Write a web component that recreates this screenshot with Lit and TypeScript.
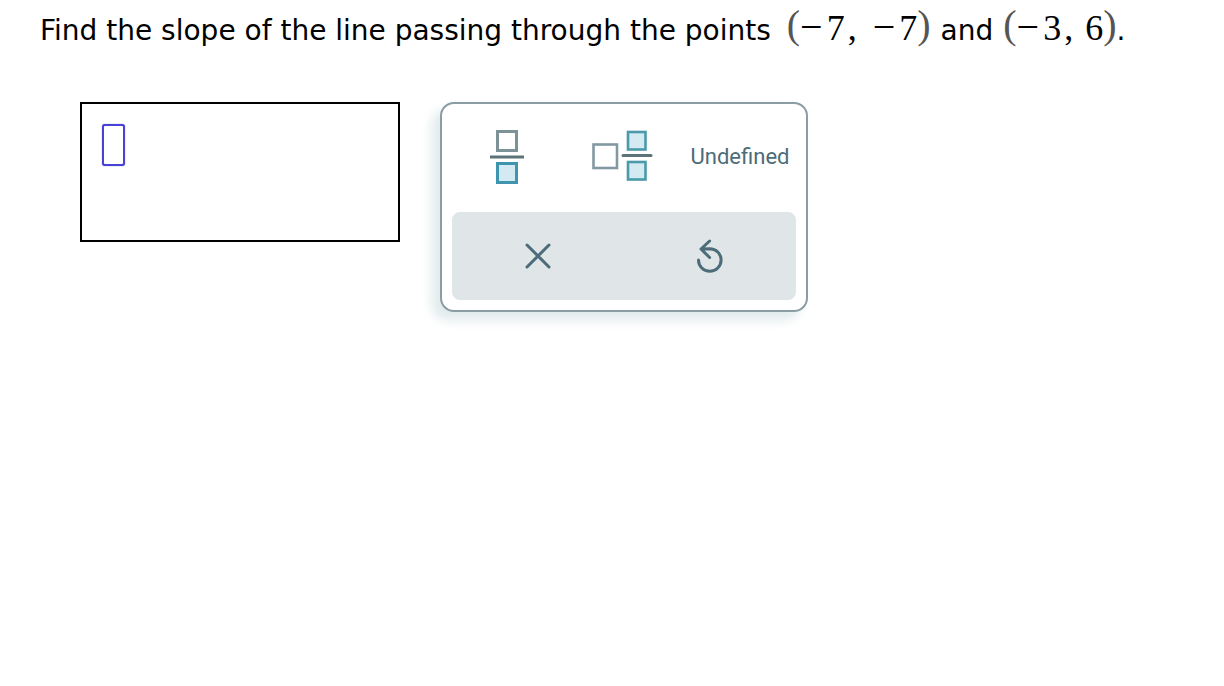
import { LitElement, html, css, svg } from "lit";
import { customElement, state } from "lit/decorators.js";

@customElement("math-point")
class MathPoint extends LitElement {
  static properties = { x: { type: String }, y: { type: String }, spaced: { type: Boolean } };
  declare x: string;
  declare y: string;
  declare spaced: boolean;

  static styles = css`
    :host {
      display: inline-block;
      font-family: "Liberation Serif", "Times New Roman", serif;
      font-size: 36px;
      line-height: 36px;
      white-space: nowrap;
    }
    .paren {
      color: #555;
      font-size: 40px;
      line-height: 32px;
      vertical-align: 2px;
    }
    .sign {
      margin-right: 4px;
      font-size: 40px;
      line-height: 32px;
    }
    .comma {
      margin: 0 12px 0 3px;
    }
    .spaced .comma {
      margin-right: 16px;
    }
  `;

  private number(value: string) {
    return value.startsWith("-")
      ? html`<span class="sign">−</span><span>${value.slice(1)}</span>`
      : html`<span>${value}</span>`;
  }

  render() {
    return html`<span class="paren">(</span><span class="pair ${this.spaced ? "spaced" : ""}">${this.number(this.x)}<span class="comma">,</span>${this.number(this.y)}</span><span class="paren">)</span>`;
  }
}

const fractionIcon = svg`
  <rect x="7.5" y="1.5" width="19" height="19" fill="#fff" stroke="#7b9296" stroke-width="3"/>
  <path d="M0 27H34" stroke="#5c7379" stroke-width="3"/>
  <rect x="7.5" y="33.5" width="19" height="19" fill="#d3eaf3" stroke="#3f95ad" stroke-width="3"/>`;

const mixedIcon = svg`
  <rect x="1.5" y="14.5" width="23.5" height="23.5" fill="#fff" stroke="#8298a2" stroke-width="2.6"/>
  <rect x="36" y="2" width="17.5" height="17.5" fill="#d3eaf3" stroke="#4a9aa9" stroke-width="2.6"/>
  <path d="M31 25.5H59" stroke="#5c7379" stroke-width="3" stroke-linecap="round"/>
  <rect x="36" y="32" width="17.5" height="17.5" fill="#d3eaf3" stroke="#4a9aa9" stroke-width="2.6"/>`;

@customElement("app-root")
class AppRoot extends LitElement {
  @state() private answer = "";

  static styles = css`
    :host {
      display: block;
      background: #fff;
      color: #000;
      font-family: "DejaVu Sans", Verdana, sans-serif;
    }
    main {
      padding: 9px 40px;
    }
    .question {
      display: flex;
      flex-wrap: wrap;
      align-items: baseline;
      margin: 0;
      font-size: 28px;
      font-weight: 400;
      line-height: 40px;
    }
    .before {
      margin-right: 16px;
    }
    .and {
      margin: 0 10px;
    }
    .work {
      display: flex;
      flex-wrap: wrap;
      align-items: flex-start;
      gap: 40px;
      padding: 51px 40px;
    }
    .answer {
      box-sizing: border-box;
      width: 320px;
      min-height: 140px;
      padding: 20px;
      border: 2px solid #000;
    }
    .slot {
      display: block;
      box-sizing: border-box;
      width: 23px;
      height: 42px;
      margin: 0;
      padding: 0;
      border: 2px solid #4a42d4;
      border-radius: 3px;
      outline: none;
      background: #fff;
      box-shadow: 0 0 1px #4a42d4;
      font: 24px "DejaVu Sans", sans-serif;
      text-align: center;
    }
    .keypad {
      box-sizing: border-box;
      width: 368px;
      padding: 0 10px 10px;
      border: 2px solid #8a9da3;
      border-radius: 14px;
      background: #fff;
      box-shadow: -8px 8px 12px #e0eaec;
    }
    button {
      display: flex;
      align-items: center;
      justify-content: center;
      padding: 0;
      border: 0;
      background: none;
      color: #4b6c78;
      font: 22px Roboto, sans-serif;
      cursor: pointer;
    }
    .insert {
      display: grid;
      grid-template-columns: repeat(3, 1fr);
      height: 106px;
      margin: 0 -2px 2px;
    }
    .word {
      padding-bottom: 2px;
    }
    .edit {
      display: grid;
      grid-template-columns: 1fr 1fr;
      height: 88px;
      border-radius: 8px;
      background: #e0e5e7;
    }
    svg {
      display: block;
    }
  `;

  private onInput(e: Event) {
    this.answer = (e.target as HTMLInputElement).value;
  }

  private clear() {
    this.answer = "";
  }

  render() {
    return html`
      <main>
        <h1 class="question">
          <span class="before">Find the slope of the line passing through the points</span>
          <math-point x="-7" y="-7" spaced></math-point>
          <span class="and">and</span>
          <math-point x="-3" y="6"></math-point><span>.</span>
        </h1>
        <div class="work">
          <div class="answer">
            <input class="slot" type="text" aria-label="Slope" .value=${this.answer} @input=${this.onInput} />
          </div>
          <div class="keypad">
            <div class="insert">
              <button type="button" aria-label="Fraction">
                <svg width="36" height="54" viewBox="0 0 36 54">${fractionIcon}</svg>
              </button>
              <button type="button" aria-label="Mixed number">
                <svg width="64" height="54" viewBox="0 0 64 54">${mixedIcon}</svg>
              </button>
              <button class="word" type="button" @click=${() => (this.answer = "Undefined")}>Undefined</button>
            </div>
            <div class="edit">
              <button type="button" aria-label="Clear" @click=${this.clear}>
                <svg width="26" height="26" viewBox="0 0 26 26" fill="none" stroke="#4b6c78" stroke-width="3" stroke-linecap="round">
                  <path d="M2 2L24 24M24 2L2 24"/>
                </svg>
              </button>
              <button type="button" aria-label="Reset" @click=${this.clear}>
                <svg width="28" height="34" viewBox="0 0 28 34" fill="none" stroke="#4b6c78" stroke-width="3" stroke-linecap="round" stroke-linejoin="round">
                  <path d="M2.5 21A11.3 11.3 0 1 0 13.8 9.7L5 10M13.6 2L5 10L13.6 18.5"/>
                </svg>
              </button>
            </div>
          </div>
        </div>
      </main>
    `;
  }
}
